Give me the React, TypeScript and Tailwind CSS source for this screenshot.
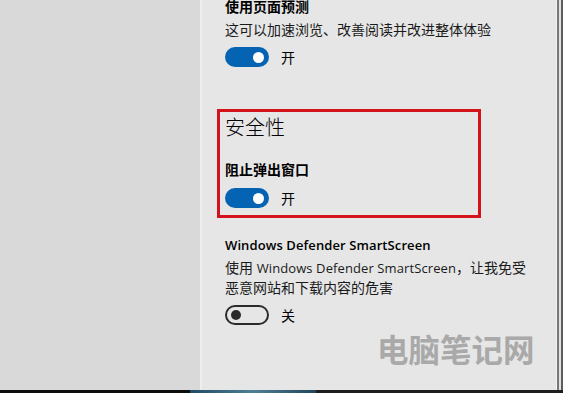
import React from 'react';

function Toggle({ on, label }: { on: boolean; label: string }) {
  return (
    <div className="flex items-center">
      {on ? (
        <div className="flex h-[20px] w-[44px] items-center justify-end rounded-full bg-[#0563b3] pr-[5px]">
          <div className="h-[11px] w-[11px] rounded-full bg-white" />
        </div>
      ) : (
        <div className="flex h-[20px] w-[44px] items-center rounded-full border-2 border-[#2b2b2b] pl-[4px]">
          <div className="h-[10px] w-[10px] rounded-full bg-[#2b2b2b]" />
        </div>
      )}
      <span className="ml-[12px] text-[14px] leading-[19px] text-black">{label}</span>
    </div>
  );
}

export default function App() {
  return (
    <div className="flex h-[393px] w-[563px] flex-col overflow-hidden bg-[#e6e6e6] font-[family-name:'Open_Sans','Noto_Sans_CJK_SC',sans-serif] text-black">
      <div className="flex min-h-0 flex-1">
        <div className="w-[200px] bg-[#d9d9d9]" />
        <div className="w-[2px] bg-[#eeeeee]" />
        <main className="relative flex flex-1 flex-col pl-[23px]">
          <div className="mt-[-3px] text-[14px] font-bold leading-[19px]">使用页面预测</div>
          <div className="mt-[4px] text-[14px] leading-[19px] text-[#1a1a1a]">这可以加速浏览、改善阅读并改进整体体验</div>
          <div className="mt-[8px]">
            <Toggle on label="开" />
          </div>

          <section className="-ml-[8px] mt-[42px] w-[264px] border-[3px] border-[#d3121c] pb-[7px] pl-[5px] pt-[2px]">
            <div className="text-[20px] font-light leading-[28px]">安全性</div>
            <div className="mt-[18px] text-[14px] font-bold leading-[19px]">阻止弹出窗口</div>
            <div className="mt-[9px]">
              <Toggle on label="开" />
            </div>
          </section>

          <div className="mt-[18px] text-[13px] font-semibold leading-[19px] tracking-[0.1px]">Windows Defender SmartScreen</div>
          <div className="mt-[3px] text-[14px] leading-[19px] text-[#1a1a1a]">
            使用 <span className="text-[13px] tracking-[0.1px]">Windows Defender SmartScreen</span>，让我免受
            <br />
            恶意网站和下载内容的危害
          </div>
          <div className="mt-[8px]">
            <Toggle on={false} label="关" />
          </div>

          <div className="absolute left-[175px] top-[331px] text-[31.5px] font-bold leading-[38px] text-[#a9a9a9]">
            电脑笔记网
          </div>
        </main>
        <div className="flex">
          <div className="w-[1px] bg-[#f2f2f2]" />
          <div className="w-[2px] bg-[#777777]" />
          <div className="w-[2px] bg-[#e2e2e2]" />
          <div className="w-[2px] bg-[#5e5e5e]" />
        </div>
      </div>
      <div className="flex h-[3px]">
        <div className="w-[190px] bg-[#0d0d0d]" />
        <div className="w-[126px] bg-gradient-to-r from-[#1d4a66] via-[#4d7f96] to-[#23455a]" />
        <div className="flex-1 bg-[#1e1e1e]" />
      </div>
    </div>
  );
}
